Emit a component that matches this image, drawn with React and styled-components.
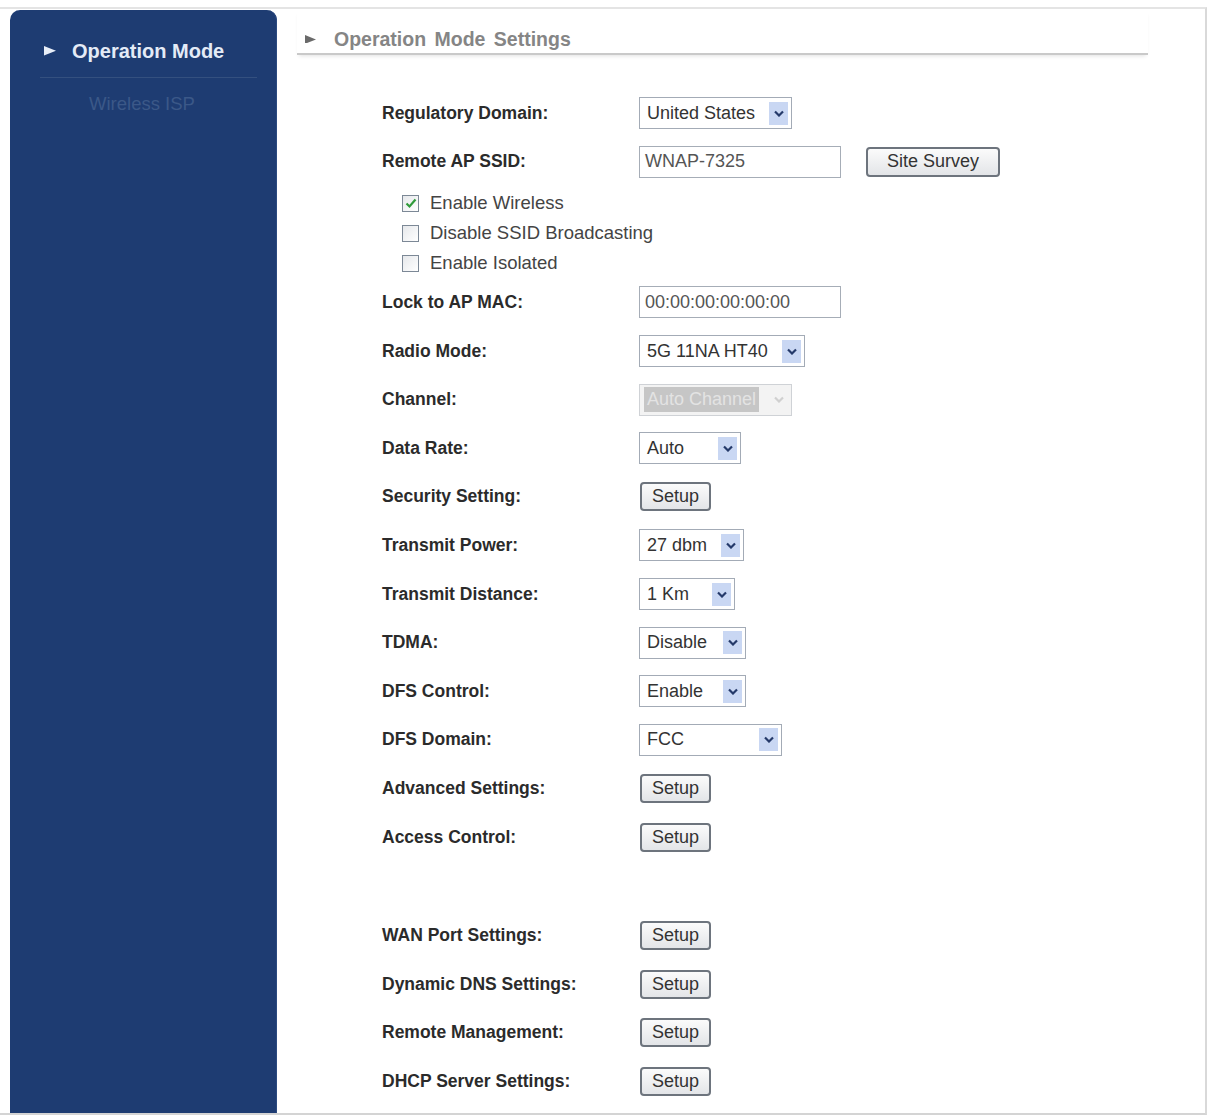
import React from "react";
import styled, { createGlobalStyle } from "styled-components";

const GlobalStyle = createGlobalStyle`
  html, body {
    margin: 0;
    padding: 0;
    background: #ffffff;
    font-family: "Liberation Sans", Arial, sans-serif;
  }
`;

const Frame = styled.div`
  box-sizing: border-box;
  margin-top: 7px;
  height: 1108px;
  border-top: 2px solid #e4e4e4;
  border-right: 2px solid #d9d9d9;
  border-bottom: 2px solid #d4d4d4;
  width: 1207px;
  display: flex;
  padding: 1px 0 0 10px;
`;

const Sidebar = styled.nav`
  width: 267px;
  flex-shrink: 0;
  background: #1e3c72;
  border-radius: 10px 10px 0 0;
  padding: 0 20px 0 30px;
  box-sizing: border-box;
  box-shadow: inset -1px 0 0 #2c4a80;
`;

const SideActive = styled.div`
  display: flex;
  align-items: center;
  gap: 16px;
  padding: 28px 0 13px 4px;
  line-height: 26px;
  font-size: 20px;
  font-weight: bold;
  color: #e4ebf7;
  border-bottom: 1px solid #34507f;
`;

const SideSub = styled.div`
  padding-left: 49px;
  margin-top: 14px;
  line-height: 24px;
  font-size: 18.5px;
  color: #3b5888;
`;

const Main = styled.main`
  flex: 1;
  padding-left: 20px;
`;

const Header = styled.div`
  display: flex;
  align-items: center;
  gap: 18px;
  margin-right: 57px;
  padding: 18px 0 3px 8px;
  line-height: 22px;
  font-size: 19.5px;
  font-weight: bold;
  color: #858585;
  word-spacing: 3px;
  border-bottom: 2px solid #c9c9c9;
  box-shadow: 0 3px 4px -2px rgba(0, 0, 0, 0.12);
`;

const Form = styled.div`
  margin-top: 34px;
  padding-left: 85px;
`;

const Row = styled.div`
  display: grid;
  grid-template-columns: 257px auto;
  align-items: center;
  height: 48.6px;
`;

const Spacer = styled.div`
  height: 50px;
`;

const Label = styled.div`
  font-size: 17.5px;
  font-weight: bold;
  color: #2b2b2b;
`;

const Controls = styled.div`
  display: flex;
  align-items: center;
  gap: 24px;
`;

const SelectBox = styled.div`
  box-sizing: border-box;
  width: ${(p) => p.$w}px;
  height: 32px;
  display: flex;
  align-items: center;
  justify-content: space-between;
  border: 1px solid ${(p) => (p.$disabled ? "#cfd2d6" : "#a3abb6")};
  background: ${(p) => (p.$disabled ? "#f3f3f3" : "#ffffff")};
  padding: 0 3px 0 ${(p) => (p.$disabled ? 4 : 7)}px;
  font-size: 18px;
  color: #333;
`;

const SelectValue = styled.span`
  white-space: nowrap;
  ${(p) =>
    p.$disabled &&
    `
    background: #c6c6c6;
    color: #e3e3e3;
    padding: 2px 3px;
  `}
`;

const ArrowBox = styled.span`
  width: 19px;
  height: 23px;
  display: flex;
  align-items: center;
  justify-content: center;
  background: ${(p) => (p.$disabled ? "transparent" : "#c9d7f3")};
`;

const TextInput = styled.div`
  box-sizing: border-box;
  width: ${(p) => p.$w}px;
  height: 32px;
  display: flex;
  align-items: center;
  border: 1px solid #a6adb7;
  padding-left: 5px;
  font-size: 18px;
  color: #555;
`;

const Button = styled.button`
  box-sizing: border-box;
  width: ${(p) => p.$w}px;
  height: ${(p) => p.$h}px;
  border: 2px solid #6d747d;
  border-radius: 4px;
  background: linear-gradient(#fbfbfb, #e3e5e8);
  font-family: "Liberation Sans", Arial, sans-serif;
  font-size: 18px;
  color: #333;
  padding: 0;
  margin-left: 1px;
`;

const Checks = styled.div`
  padding-top: 2px;
`;

const CheckRow = styled.label`
  display: flex;
  align-items: center;
  gap: 11px;
  height: 30px;
  padding-left: 20px;
  font-size: 18.5px;
  color: #444;
`;

const CheckBox = styled.span`
  box-sizing: border-box;
  width: 17px;
  height: 17px;
  border: 1px solid #7c8896;
  background: linear-gradient(135deg, #e6e8eb, #ffffff);
  display: flex;
  align-items: center;
  justify-content: center;
`;

const Chevron = ({ color }) => (
  <svg width="10" height="7" viewBox="0 0 10 7">
    <path d="M1 1.5 L5 5.5 L9 1.5" fill="none" stroke={color} strokeWidth="2.2" />
  </svg>
);

const Select = ({ value, w, disabled }) => (
  <SelectBox $w={w} $disabled={disabled}>
    <SelectValue $disabled={disabled}>{value}</SelectValue>
    <ArrowBox $disabled={disabled}>
      <Chevron color={disabled ? "#d0d0d0" : "#253a6a"} />
    </ArrowBox>
  </SelectBox>
);

const Check = ({ checked, children }) => (
  <CheckRow>
    <CheckBox>
      {checked && (
        <svg width="12" height="11" viewBox="0 0 12 11">
          <path d="M1.5 5.5 L4.5 8.5 L10.5 1.5" fill="none" stroke="#2f9a3a" strokeWidth="2.2" />
        </svg>
      )}
    </CheckBox>
    {children}
  </CheckRow>
);

const Tri = ({ color, size }) => (
  <svg width={size} height={size * 0.8} viewBox="0 0 10 8">
    <path d="M0 0 L10 4 L0 8 Z" fill={color} />
  </svg>
);

const Setup = () => (
  <Button $w={71} $h={29}>
    Setup
  </Button>
);

const field = (label, control) => (
  <Row key={label}>
    <Label>{label}</Label>
    <Controls>{control}</Controls>
  </Row>
);

export default function App() {
  return (
    <>
      <GlobalStyle />
      <Frame>
        <Sidebar>
          <SideActive>
            <Tri color="#e8eef8" size={12} />
            Operation Mode
          </SideActive>
          <SideSub>Wireless ISP</SideSub>
        </Sidebar>
        <Main>
          <Header>
            <Tri color="#6a6a6a" size={11} />
            Operation Mode Settings
          </Header>
          <Form>
            {field("Regulatory Domain:", <Select value="United States" w={153} />)}
            {field(
              "Remote AP SSID:",
              <>
                <TextInput $w={202}>WNAP-7325</TextInput>
                <Button $w={134} $h={30}>
                  Site Survey
                </Button>
              </>
            )}
            <Checks>
              <Check checked>Enable Wireless</Check>
              <Check>Disable SSID Broadcasting</Check>
              <Check>Enable Isolated</Check>
            </Checks>
            {field("Lock to AP MAC:", <TextInput $w={202}>00:00:00:00:00:00</TextInput>)}
            {field("Radio Mode:", <Select value="5G 11NA HT40" w={166} />)}
            {field("Channel:", <Select value="Auto Channel" w={153} disabled />)}
            {field("Data Rate:", <Select value="Auto" w={102} />)}
            {field("Security Setting:", <Setup />)}
            {field("Transmit Power:", <Select value="27 dbm" w={105} />)}
            {field("Transmit Distance:", <Select value="1 Km" w={96} />)}
            {field("TDMA:", <Select value="Disable" w={107} />)}
            {field("DFS Control:", <Select value="Enable" w={107} />)}
            {field("DFS Domain:", <Select value="FCC" w={143} />)}
            {field("Advanced Settings:", <Setup />)}
            {field("Access Control:", <Setup />)}
            <Spacer />
            {field("WAN Port Settings:", <Setup />)}
            {field("Dynamic DNS Settings:", <Setup />)}
            {field("Remote Management:", <Setup />)}
            {field("DHCP Server Settings:", <Setup />)}
          </Form>
        </Main>
      </Frame>
    </>
  );
}
